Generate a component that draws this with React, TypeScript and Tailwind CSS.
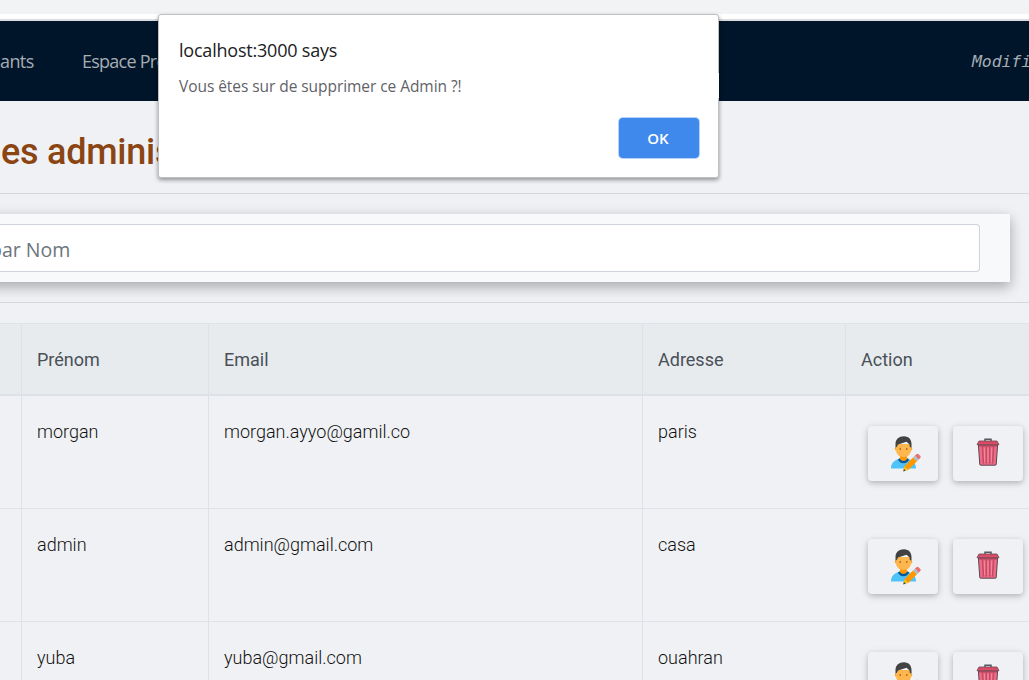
import React from 'react';

const rows = [
  { prenom: 'morgan', email: 'morgan.ayyo@gamil.co', adresse: 'paris' },
  { prenom: 'admin', email: 'admin@gmail.com', adresse: 'casa' },
  { prenom: 'yuba', email: 'yuba@gmail.com', adresse: 'ouahran' },
];

const columns = 'grid grid-cols-[22px_187px_434px_203px_183px]';

function EditIcon() {
  return (
    <svg width="30" height="36" viewBox="0 0 30 36" className="block">
      <path d="M0 32.500C0 27 3 24.400 8 23L12.500 21.500L17 23C22 24.400 25 27 25 32.500Z" fill="#4fc3f7" />
      <path d="M7 23.300C8.500 28.500 16.500 28.500 18 23.300L15.500 22H9.500Z" fill="#01579b" />
      <path d="M9 18H16V23C14.500 25.500 10.500 25.500 9 23Z" fill="#ff9800" />
      <circle cx="5.200" cy="13" r="1.500" fill="#ffa726" />
      <circle cx="19.800" cy="13" r="1.500" fill="#ffa726" />
      <path d="M5 8H20V14C20 18.200 16.800 21 12.500 21S5 18.200 5 14Z" fill="#ffb74d" />
      <path d="M4.500 12V8C4.500 3 8 .2 13 .2C18 .2 20.500 3.800 20.500 8V12L18.600 10.500V8.500L15.500 5.800L7 8.500L6 10.500Z" fill="#424242" />
      <circle cx="9.200" cy="13" r=".8" fill="#784719" />
      <circle cx="15.800" cy="13" r=".8" fill="#784719" />
      <path d="M23.800 19.800L25.400 18.200Q26.500 17.200 27.600 18.200L29.300 19.900Q30.200 21 29.200 22.100L27.600 23.700Z" fill="#e57373" />
      <path d="M22 21.600L23.800 19.800L27.600 23.700L25.800 25.500Z" fill="#b0bec5" />
      <path d="M13.400 30.200L22 21.600L25.800 25.500L17.200 34.100Z" fill="#ff9800" />
      <path d="M13.400 30.200L17.200 34.100L12.300 35.300Z" fill="#ffc107" />
      <path d="M12.900 32.800L14.700 34.700L12.300 35.400Z" fill="#37474f" />
    </svg>
  );
}

function TrashIcon() {
  return (
    <svg width="24" height="28" viewBox="0 0 24 28" className="block">
      <path d="M9 3V1.300H15V3" fill="none" stroke="#555961" strokeWidth="1.500" />
      <path d="M2.400 7H21.600L20.200 26.500Q20.100 27.200 19.300 27.200H4.700Q3.900 27.200 3.800 26.500Z" fill="#ee6b87" stroke="#5b4650" strokeWidth="1" />
      <path d="M3 3H21L23 6.700H1Z" fill="#dc4b65" stroke="#684650" strokeWidth=".8" />
      <path d="M3.500 8H20.500" stroke="#ab3b52" strokeWidth="1" />
      <path d="M6.500 9L7.400 25M10.300 9V25M13.700 9V25M17.500 9L16.600 25" stroke="#c04c64" strokeWidth="1.500" strokeLinecap="round" />
      <path d="M8.300 10L8.700 24M12 10V24M15.700 10L15.300 24" stroke="#ff91a8" strokeWidth=".7" />
    </svg>
  );
}

function ActionButton({ label, children }: { label: string; children: React.ReactNode }) {
  return (
    <button
      aria-label={label}
      className="flex h-[55px] w-[70px] shrink-0 justify-center rounded bg-[#f0f1f5] shadow-[0_2px_5px_rgba(0,0,0,0.16),0_2px_10px_rgba(0,0,0,0.12)]"
    >
      {children}
    </button>
  );
}

function Dialog() {
  return (
    <div
      role="alertdialog"
      className="absolute left-[158px] top-[14px] flex h-[164px] w-[561px] flex-col rounded-[3px] border border-[#bfc1c3] bg-white pl-5 pr-[19px] font-['Open_Sans',sans-serif] shadow-[0_2px_4px_rgba(0,0,0,0.4)]"
    >
      <h2 className="mt-[23px] h-6 whitespace-nowrap font-['Open_Sans',sans-serif] text-[18px] leading-6 tracking-[-0.210px] text-[#202124]">
        localhost:3000 says
      </h2>
      <p className="mt-[14px] h-5 whitespace-nowrap text-[15.500px] leading-5 tracking-[-0.060px] text-[#5f6368]">
        Vous êtes sur de supprimer ce Admin ?!
      </p>
      <button className="mt-[22px] h-10 w-20 self-end rounded-[4px] bg-[#4089ec] pr-[2px] text-[15px] font-semibold text-white shadow-[0_0_0_1px_#b5d2fa]">
        OK
      </button>
      <span className="absolute -right-px top-[58px] h-[25px] w-px bg-white" />
    </div>
  );
}

export default function App() {
  return (
    <div className="relative h-[680px] w-[1029px] overflow-hidden bg-[#f0f1f5] font-[Roboto,sans-serif]">
      <div className="h-[14px] bg-[#f1f3f4]" />
      <div className="h-[7px] border-b-2 border-[#dadce0] bg-white" />
      <nav className="flex h-20 items-center justify-between overflow-hidden whitespace-nowrap bg-[#001529] text-[#a6adb4]">
        <div className="flex gap-[50px] font-['Open_Sans',sans-serif] text-[18px]">
          <span className="w-8 tracking-[-0.600px]">ants</span>
          <span className="tracking-[-0.750px]">Espace Pro</span>
        </div>
        <span className="mt-[3px] w-[57px] font-['DejaVu_Sans_Mono',monospace] text-[16.500px] italic tracking-[-0.100px]">Modifi</span>
      </nav>
      <header className="flex h-[93px] items-center overflow-hidden border-b border-[#d5d7db]">
        <h1 className="ml-[1px] mt-[9px] whitespace-nowrap text-[36px] font-medium tracking-[-0.250px] text-[#8b4513]">es administrateurs</h1>
      </header>
      <section className="-ml-5 mt-5 flex h-[68px] w-[1030px] items-center bg-[#f8f9fb] shadow-[0_5px_11px_rgba(0,0,0,0.18),0_4px_15px_rgba(0,0,0,0.15)]">
        <div className="flex h-12 w-[1000px] items-center overflow-hidden rounded-r-[4px] border border-l-0 border-[#ced4da] bg-white pl-[10px]">
          <span className="mt-1 whitespace-nowrap font-['Open_Sans',sans-serif] text-[19.500px] text-[#6c757d]">par Nom</span>
        </div>
      </section>
      <div className="mt-5 h-px bg-[#d5d7db]" />
      <main className="mt-5 text-[18px]">
        <div className={`${columns} h-[73px] border-b-2 border-t border-[#dee2e6] bg-[#e7ebee] text-[#495057]`}>
          {['', 'Prénom', 'Email', 'Adresse', 'Action'].map((name, i) => (
            <div key={i} className="border-r border-[#dee2e6] pl-[15px] pt-[22px] last:border-r-0">{name}</div>
          ))}
        </div>
        {rows.map((row) => (
          <div key={row.email} className={`${columns} h-[113px] border-b border-[#dee2e6] font-light text-[#111]`}>
            <div className="border-r border-[#dee2e6]" />
            <div className="border-r border-[#dee2e6] pl-[15px] pt-[22px]">{row.prenom}</div>
            <div className="border-r border-[#dee2e6] pl-[15px] pt-[22px]">{row.email}</div>
            <div className="border-r border-[#dee2e6] pl-[15px] pt-[22px]">{row.adresse}</div>
            <div className="flex gap-[15px] pl-[22px] pt-[30px]">
              <ActionButton label="Modifier">
                <span className="ml-[5px] mt-[10px]"><EditIcon /></span>
              </ActionButton>
              <ActionButton label="Supprimer">
                <span className="mt-[12px]"><TrashIcon /></span>
              </ActionButton>
            </div>
          </div>
        ))}
      </main>
      <Dialog />
    </div>
  );
}
